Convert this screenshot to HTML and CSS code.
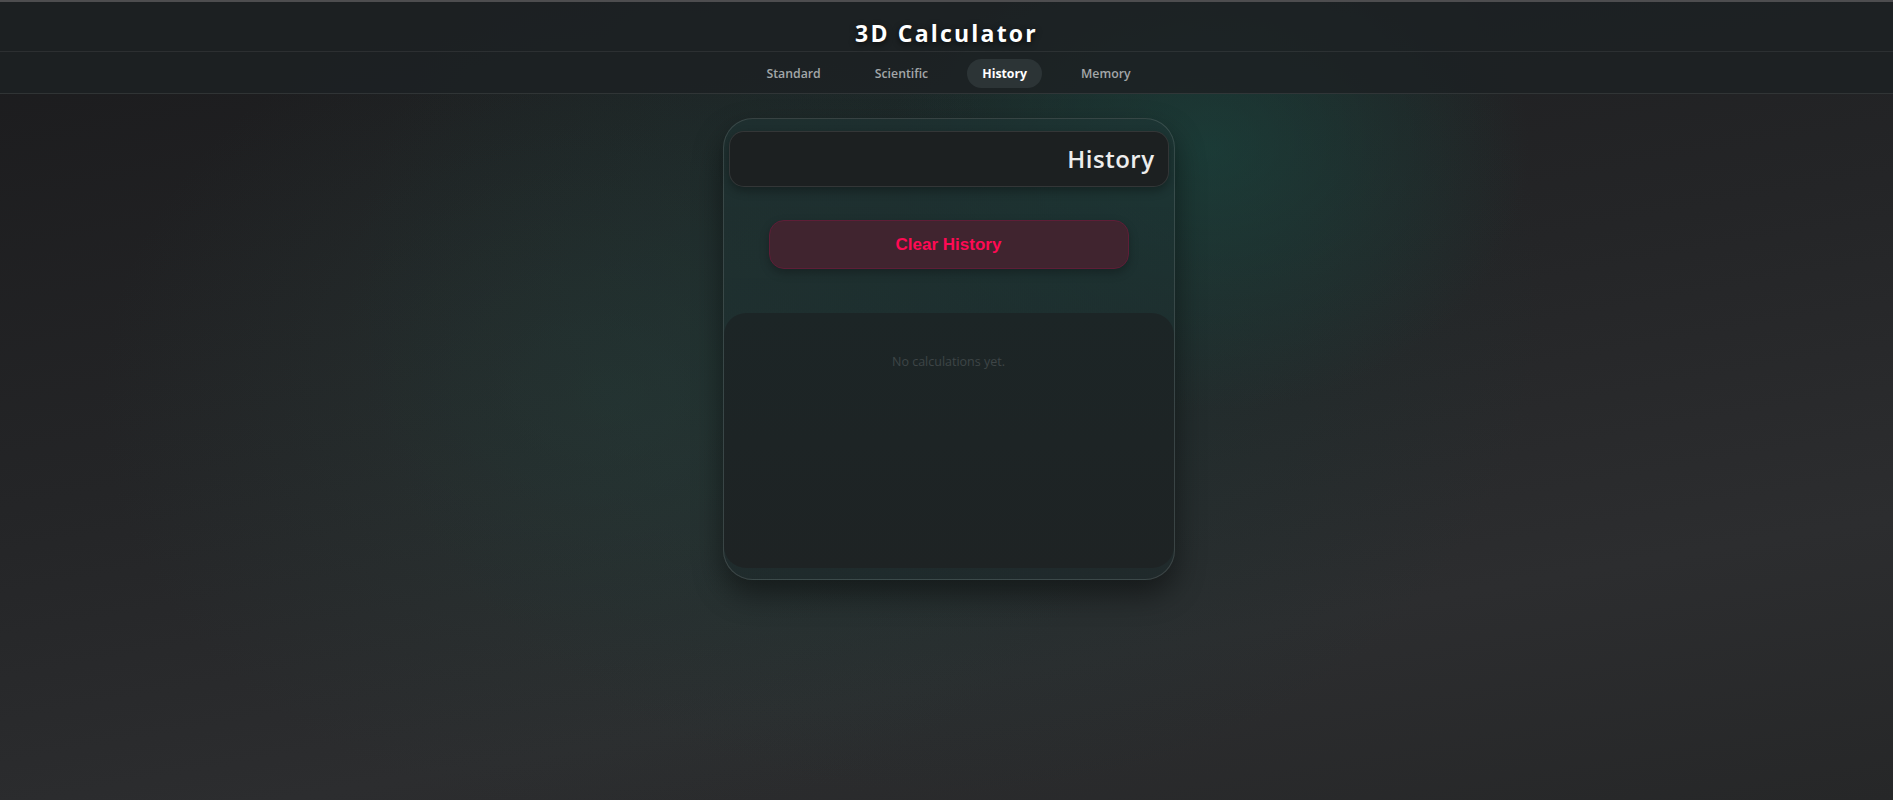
FILE: index.html
```html
<!DOCTYPE html>
<html lang="en">
<head>
<meta charset="utf-8">
<title>3D Calculator</title>
<link rel="stylesheet" href="styles.css">
</head>
<body>
<header class="topbar">
  <h1 class="title">3D Calculator</h1>
  <nav class="tabs">
    <button class="tab">Standard</button>
    <button class="tab">Scientific</button>
    <button class="tab active">History</button>
    <button class="tab">Memory</button>
  </nav>
</header>
<main class="stage">
  <section class="calc">
    <div class="display">History</div>
    <div class="actions">
      <button class="clear-btn">Clear History</button>
    </div>
    <div class="history-list">
      <p class="empty">No calculations yet.</p>
    </div>
  </section>
</main>
</body>
</html>
```

FILE: styles.css
```css
* { box-sizing: border-box; }
html, body { height: 100%; }
body {
  margin: 0;
  font-family: "Open Sans", "Noto Sans", sans-serif;
  color: #fff;
  border-top: 2px solid #4d4d4f;
  background:
    radial-gradient(ellipse 320px 260px at 1210px 150px, rgba(24, 74, 66, 0.55), rgba(24, 74, 66, 0) 100%),
    radial-gradient(ellipse 520px 420px at 620px 400px, rgba(40, 70, 64, 0.35), rgba(40, 70, 64, 0) 100%),
    radial-gradient(ellipse 600px 500px at 950px 300px, rgba(22, 58, 54, 0.45), rgba(22, 58, 54, 0) 100%),
    linear-gradient(170deg, #1b1b1d 0%, #242527 45%, #2c2d2f 75%, #262728 100%);
  overflow: hidden;
}
.topbar {
  background: rgba(28, 33, 35, 0.85);
  border-bottom: 1px solid rgba(255, 255, 255, 0.09);
}
.title {
  margin: 0;
  height: 50px;
  padding-top: 15px;
  text-align: center;
  font-size: 23px;
  font-weight: 700;
  line-height: 32px;
  letter-spacing: 2.2px;
  text-shadow: 0 2px 6px rgba(0, 0, 0, 0.7);
  border-bottom: 1px solid rgba(255, 255, 255, 0.07);
}
.tabs {
  height: 41px;
  display: flex;
  justify-content: center;
  align-items: center;
  gap: 24px;
  padding-top: 2px;
  padding-left: 4px;
}
.tab {
  font-family: "Open Sans", "Noto Sans", sans-serif;
  font-size: 12.3px;
  font-weight: 600;
  color: #a3a7a9;
  background: none;
  border: 0;
  height: 29px;
  padding: 0 15px;
  border-radius: 15px;
}
.tab.active {
  color: #ffffff;
  font-weight: 700;
  background: #2c3436;
}
.stage {
  display: flex;
  justify-content: center;
  padding-top: 24px;
  padding-left: 4px;
}
.calc {
  width: 452px;
  height: 462px;
  border-radius: 30px;
  border: 1px solid rgba(255, 255, 255, 0.12);
  background: linear-gradient(180deg, rgba(30, 52, 52, 0.55), rgba(28, 40, 42, 0.6));
  box-shadow: 0 14px 30px rgba(0, 0, 0, 0.45);
  display: flex;
  flex-direction: column;
  padding: 12px 5px 11px;
}
.display {
  height: 56px;
  border-radius: 15px;
  background: #1c2021;
  border: 1px solid rgba(255, 255, 255, 0.1);
  box-shadow: 0 4px 10px rgba(0, 0, 0, 0.3);
  text-align: right;
  padding: 0 13px;
  font-size: 24px;
  font-weight: 600;
  line-height: 54px;
  color: #ededed;
  letter-spacing: 0.5px;
}
.actions {
  display: flex;
  justify-content: center;
  padding: 33px 0 44px;
}
.clear-btn {
  width: 360px;
  height: 49px;
  border-radius: 15px;
  background: #40242f;
  border: 1px solid #5e1e37;
  color: #ff0a54;
  font-family: "Liberation Sans", Arial, sans-serif;
  font-size: 17px;
  font-weight: 700;
  box-shadow: 0 4px 10px rgba(0, 0, 0, 0.25);
}
.history-list {
  flex: 1;
  margin: 0 -5px;
  border-radius: 22px;
  background: linear-gradient(180deg, #1c2526, #1e2324);
  padding-top: 40px;
}
.empty {
  margin: 0;
  text-align: center;
  font-size: 12.5px;
  color: #3e4547;
}
```
